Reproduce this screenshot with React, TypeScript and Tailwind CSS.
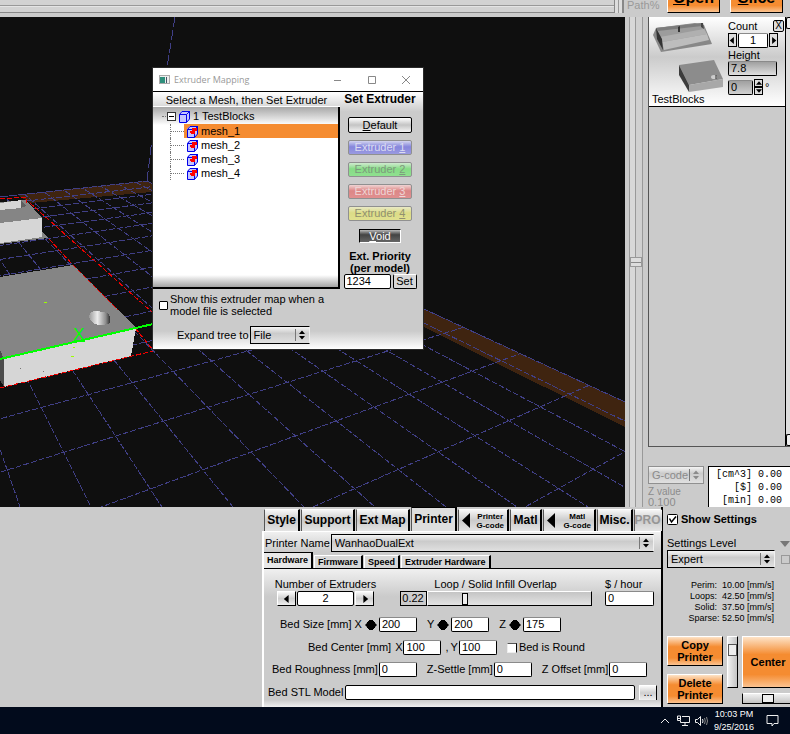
import { useState } from 'react';
import type { ReactNode } from 'react';
import clsx from 'clsx';

const BTN =
  'border border-t-white border-l-white border-r-black border-b-black bg-linear-to-b from-[#fafafa] via-[#cfcfcf] to-[#f0f0f0]';
const FIELD =
  'h-[15px] min-w-0 rounded-[2px] border border-t-[#8a8a8a] border-l-black border-r-black border-b-black bg-white px-[2px] pb-px text-[11px] leading-none';
const ORANGE =
  'border border-t-white border-l-white border-r-black border-b-black bg-[linear-gradient(#fde3c8,#f58c31_35%,#f58c31_75%,#fbc391)] font-bold';

const EXTRUDERS = [
  { n: 1, style: 'bg-linear-to-b from-[#d4d4ee] via-[#8686dc] via-45% to-[#9a9ae0] text-[#dcdcf0]' },
  { n: 2, style: 'bg-linear-to-b from-[#cfe9cf] via-[#86dc86] via-45% to-[#8fe08f] text-[#7d9a7d]' },
  { n: 3, style: 'bg-linear-to-b from-[#eed4d4] via-[#dc8686] via-45% to-[#e09090] text-[#eed6d6]' },
  { n: 4, style: 'bg-linear-to-b from-[#e9e9c4] via-[#dcdc86] via-45% to-[#e0e08f] text-[#909070]' },
];

const TABS = [
  { label: 'Style', width: 'w-[36px]' },
  { label: 'Support', width: 'w-[54px]' },
  { label: 'Ext Map', width: 'w-[54px]' },
  { label: 'Printer', width: 'w-[46px]' },
  { label: 'Printer\nG-code', width: 'w-[51px]', arrow: true },
  { label: 'Matl', width: 'w-[32px]' },
  { label: 'Matl\nG-code', width: 'w-[53px]', arrow: true },
  { label: 'Misc.', width: 'w-[36px]' },
  { label: 'PRO', width: 'w-[28px]', disabled: true },
];

const SUB_TABS = ['Hardware', 'Firmware', 'Speed', 'Extruder Hardware'];

const SPEEDS = [
  'Perim:  10.00 [mm/s]',
  'Loops:  42.50 [mm/s]',
  'Solid:  37.50 [mm/s]',
  'Sparse: 52.50 [mm/s]',
];

// Bed grid: both line families run to a vanishing point on the horizon
const GRID_A = Array.from({ length: 12 }, (_, k) => 20 + 71 * k);
const GRID_B = Array.from({ length: 18 }, (_, k) => 525 - 212 * k);

function Arrow({ dir, size = 8 }: { dir: 'left' | 'right' | 'up' | 'down'; size?: number }) {
  const points = {
    left: '7,0 7,10 1,5',
    right: '3,0 3,10 9,5',
    up: '0,8 10,8 5,2',
    down: '0,2 10,2 5,8',
  }[dir];
  return (
    <svg width={size} height={size} viewBox="0 0 10 10" className="shrink-0">
      <polygon points={points} fill="currentColor" />
    </svg>
  );
}

interface SelectProps {
  id: string;
  value: string;
  label?: string;
  className?: string;
  disabled?: boolean;
}

function Select({ id, value, label, className, disabled }: SelectProps) {
  return (
    <div className={clsx('relative', className)}>
      <select
        id={id}
        aria-label={label}
        disabled={disabled}
        defaultValue={value}
        className={clsx(
          'block h-[18px] w-full appearance-none border bg-linear-to-b from-[#f4f4f4] via-[#cbcbcb] via-40% to-[#e0e0e0] pl-[3px] text-[11px] leading-none',
          disabled
            ? 'border-[#909090] text-[#8b8b8b]'
            : 'border-t-black border-l-black border-r-[#f0f0f0] border-b-black text-black',
        )}
      >
        <option>{value}</option>
      </select>
      <svg
        width="14"
        height="12"
        viewBox="0 0 14 12"
        className={clsx(
          'pointer-events-none absolute top-[3px] right-[1px]',
          disabled ? 'text-[#8b8b8b]' : 'text-black',
        )}
      >
        <path d="M0.5 0V12" stroke="#777" />
        <path d="M4 5L7 1.5L10 5ZM4 7H10L7 10.5Z" fill="currentColor" />
      </svg>
    </div>
  );
}

function Field({ id, label, value, icon }: { id: string; label: string; value: string; icon?: boolean }) {
  return (
    <div className="flex shrink-0 items-center">
      <label htmlFor={id} className="mr-[1px] whitespace-pre">
        {label}
      </label>
      {icon && (
        <svg width="12" height="10" viewBox="0 0 12 10" className="mx-[2px]">
          <path d="M0 5L2 3V2H3V1H4V0H8V1H9V2H10V3L12 5L10 7V8H9V9H8V10H4V9H3V8H2V7Z" />
        </svg>
      )}
      <input id={id} defaultValue={value} className={clsx(FIELD, 'w-[38px]')} />
    </div>
  );
}

function Scene() {
  return (
    <svg
      viewBox="0 17 625 490"
      preserveAspectRatio="xMinYMax slice"
      className="absolute inset-0 h-full w-full"
      shapeRendering="crispEdges"
      aria-hidden="true"
    >
      <defs>
        <clipPath id="bed">
          <polygon points="147,181 851,507 0,507 0,197" />
        </clipPath>
        <linearGradient id="peg">
          <stop offset="0" stopColor="#9a9a9a" />
          <stop offset="0.4" stopColor="#ececec" />
          <stop offset="0.8" stopColor="#8c8c8c" />
          <stop offset="1" stopColor="#333" />
        </linearGradient>
      </defs>
      <rect y="17" width="625" height="490" fill="#0f0f0f" />
      <polygon points="18,195 147,181 625,402 625,427 152,192 30,203" fill="#3f2410" />
      <g stroke="#403f86" strokeDasharray="6 2" fill="none">
        <g clipPath="url(#bed)">
          {GRID_A.map((x) => (
            <line key={x} x1="-138" y1="49" x2={x} y2="507" />
          ))}
          {GRID_B.map((x) => (
            <line key={x} x1="1350" y1="50" x2={x} y2="507" />
          ))}
        </g>
        <path d="M0 197L147 181L625 402" strokeDasharray="8 1" />
        <path d="M175 17L167 68L151 147L147 181" strokeDasharray="10 3" />
      </g>
      {/* tray */}
      <polygon points="0,202 26,200 42,218 42,232 48,238 0,244" fill="#858585" />
      <polygon points="0,203 21,200 21,208 0,210" fill="#d6d6d6" />
      <polygon points="21,200 26,206 21,208" fill="#5f5f5f" />
      <polygon points="0,223 42,218 42,237 0,243" fill="#d6d6d6" />
      {/* block */}
      <polygon points="0,277 73,265 135,327 0,359" fill="#858585" />
      <polygon points="4,359 136,328 131,356 4,387" fill="#d6d6d6" />
      <polygon points="0,350 4,359 4,387 0,380" fill="#4c4c4c" />
      <path d="M90 314Q91 311 97 311L108 313L110 317V322L108 324Q100 326 95 324Q90 321 89 317Z" fill="url(#peg)" />
      <path d="M0 199L26 197V203M30 203L153 313M49 239L73 265L118 310M135 328L153 350M0 388L153 351" stroke="#f00000" strokeDasharray="5 2" fill="none" />
      <path d="M0 359L153 324" stroke="#00ff00" strokeWidth="2" />
      <text x="79" y="340" textAnchor="middle" fill="#00ff00" className="font-['Liberation_Sans'] text-[17px]">
        X
      </text>
      <path d="M74 341H85" stroke="#00ff00" strokeWidth="2" />
      <path d="M44 302.500H47M73 347.500H75M71 356.500H74" stroke="#9cff00" />
      <path d="M20 368.500H21M43 371.500H44" stroke="#777" />
    </svg>
  );
}

function CubeIcon({ mesh }: { mesh?: boolean }) {
  return (
    <svg width="13" height="13" viewBox="0 0 13 13" className="shrink-0">
      <path d="M1 4L4 1H12V8L9 12H1Z" fill="#c4c4ff" />
      <path d="M1.500 4.500H8.500M1.500 4.500V12.500H8.500V4.500M1.500 4.500L4 1.500H12M8.500 4.500L11.500 1.500V9L8.500 12.500" fill="none" stroke="#0000e8" />
      {mesh && <path d="M4 6H6V3H11V6H9V9H5V8H4Z" fill="#ff0000" />}
    </svg>
  );
}

function MeshTree() {
  const [selected, setSelected] = useState('mesh_1');
  return (
    <div className="flex-1 border-r-2 border-b-2 border-r-black border-b-black bg-white bg-linear-to-b from-[#a8a8a8] via-white via-10% to-white">
      <div className="flex h-full flex-col">
        <div className="flex h-[17px] items-center pt-[2px] pl-[9px]">
          <span className="mr-[1px] w-[4px] border-t border-dotted border-[#777]" />
          <svg width="9" height="9" viewBox="0 0 9 9" className="mr-[2px]">
            <rect x=".5" y=".5" width="8" height="8" fill="#fff" stroke="#333" />
            <path d="M2 4.500H7" stroke="#000" />
          </svg>
          <CubeIcon />
          <span className="ml-[2px] whitespace-pre">1 TestBlocks</span>
        </div>
        <div className="ml-[17px] w-[168px]">
          {['mesh_1', 'mesh_2', 'mesh_3', 'mesh_4'].map((name) => (
            <button
              key={name}
              onClick={() => setSelected(name)}
              className="flex h-[14px] w-full border-l border-dotted border-[#777] leading-[14px]"
            >
              <span className="mt-[7px] w-[13px] shrink-0 border-t border-dotted border-[#777]" />
              <span className={clsx('flex flex-1 items-center gap-[2px] pl-[2px]', selected === name && 'bg-[#f58c31]')}>
                <CubeIcon mesh />
                {name}
              </span>
            </button>
          ))}
        </div>
        <div className="mt-auto h-[12px] bg-linear-to-b from-white to-[#a4a4a4]" />
      </div>
    </div>
  );
}

function ExtruderDialog() {
  return (
    <section
      aria-label="Extruder Mapping"
      className="absolute top-[68px] left-[153px] w-[270px] bg-[#cbcbcb] shadow-[0_0_0_1px_#2a2a2a]"
    >
      <header className="flex h-[23px] items-center bg-white pl-[6px] text-[#999]">
        <svg width="11" height="9" viewBox="0 0 11 9">
          <rect x=".5" y=".5" width="10" height="8" fill="#eee" stroke="#aaa" />
          <path d="M1 2H6V8H1Z" fill="#2f8f7c" />
          <path d="M7 2H8V8H7Z" fill="#456" />
        </svg>
        <h2 className="ml-[4px] flex-1 font-['Open_Sans',sans-serif] text-[9px]">Extruder Mapping</h2>
        <button aria-label="Minimize" className="w-[34px]">
          <svg width="8" height="8" viewBox="0 0 8 8" className="mx-auto"><path d="M0 4.500H7" stroke="#888" /></svg>
        </button>
        <button aria-label="Maximize" className="w-[34px]">
          <svg width="8" height="8" viewBox="0 0 8 8" className="mx-auto"><path d="M.5 .5H7.500V7.500H.5Z" fill="none" stroke="#888" /></svg>
        </button>
        <button aria-label="Close" className="w-[34px]">
          <svg width="8" height="8" viewBox="0 0 8 8" className="mx-auto"><path d="M0 0L8 8M8 0L0 8" stroke="#888" /></svg>
        </button>
      </header>
      <div className="flex h-[198px] border-t border-black bg-linear-to-b from-white via-[#cbcbcb] via-10% to-[#cbcbcb]">
        <div className="flex w-[187px] flex-col">
          <h3 className="h-[15px] border-b border-white pt-px text-center leading-[15px]">
            Select a Mesh, then Set Extruder
          </h3>
          <MeshTree />
        </div>
        <div className="flex flex-1 flex-col items-center pr-[3px]">
          <h3 className="mb-[11px] text-[12px] leading-[14px] font-bold">Set Extruder</h3>
          <div className="flex w-[64px] flex-col gap-[7px]">
            <button className="h-[16px] rounded-[2px] border border-black bg-linear-to-b from-[#fff] via-[#c4c4c4] to-[#f4f4f4] leading-none">
              <u>D</u>efault
            </button>
            {EXTRUDERS.map(({ n, style }) => (
              <button key={n} className={clsx('h-[15px] rounded-[2px] border border-[#909090] leading-none', style)}>
                Extruder <u>{n}</u>
              </button>
            ))}
          </div>
          <button className="mt-[8px] h-[15px] w-[42px] border border-t-black border-l-black border-r-white border-b-white bg-linear-to-b from-[#bbb] via-[#444] via-40% to-[#666] leading-none text-white">
            <u>V</u>oid
          </button>
          <label htmlFor="priority" className="mt-[7px] text-center leading-[12px] font-bold">
            Ext. Priority
            <br />
            (per model)
          </label>
          <div className="flex gap-[2px]">
            <input id="priority" defaultValue="1234" className={clsx(FIELD, 'w-[47px] border-t-black')} />
            <button className="h-[15px] w-[24px] rounded-[2px] border border-t-white border-l-black border-r-black border-b-black bg-[#d8d8d8] leading-none">
              Set
            </button>
          </div>
        </div>
      </div>
      <div className="bg-linear-to-b from-[#cbcbcb] via-[#cbcbcb] via-70% to-white pt-[4px] pb-[5px] pl-[6px]">
        <label className="flex items-center gap-[2px] leading-[12px]">
          <input type="checkbox" className="h-[9px] w-[9px] appearance-none rounded-[1px] border border-black bg-white checked:bg-black" />
          <span>
            Show this extruder map when a
            <br />
            model file is selected
          </span>
        </label>
        <div className="mt-[9px] ml-[18px] flex items-center gap-[1px]">
          <label htmlFor="expand">Expand tree to</label>
          <Select id="expand" value="File" className="w-[60px]" />
        </div>
      </div>
    </section>
  );
}

function ModelCard() {
  return (
    <div className="flex h-[90px] flex-1 border-b border-black bg-linear-to-b from-white via-[#cbcbcb] via-45% to-white">
      <div className="flex flex-1 flex-col pl-[3px]">
        <svg width="74" height="76" viewBox="0 0 74 76">
          <polygon points="1,18 9,35 60,27 52,8 43,6 4,11" fill="#888" />
          <polygon points="4,11 50,6 55,17 10,25" fill="#9c9c9c" />
          <polygon points="4,11 50,6 50,9 6,14" fill="#7c7c7c" />
          <polygon points="8,20 52,12 55,17 10,25" fill="#b0b0b0" />
          <polygon points="10,25 55,17 57,23 12,33" fill="#bdbdbd" />
          <polygon points="4,11 10,22 11,33 5,22" fill="#333" />
          <polygon points="26,10 28,9 28,15 26,15" fill="#333" />
          <polygon points="49,6 51,6 52,12 49,10" fill="#444" />
          <polygon points="27,48 62,43 71,62 37,68" fill="#8c8c8c" />
          <polygon points="27,48 37,68 37,75 27,58" fill="#3c3c3c" />
          <polygon points="37,68 71,62 71,70 37,75" fill="#a8a8a8" />
          <ellipse cx="62" cy="60" rx="3" ry="2" fill="#ccc" />
          <path d="M64 58V62" stroke="#333" />
        </svg>
        <span className="leading-[12px]">TestBlocks</span>
      </div>
      <div className="w-[57px] pt-[2px]">
        <div className="flex h-[14px] items-center">
          <label htmlFor="count" className="flex-1">Count</label>
          <button aria-label="Remove model" className="mr-[1px] h-[12px] w-[11px] rounded-[2px] border border-black bg-[#ddd] text-[10px] leading-none">
            X
          </button>
        </div>
        <div className="flex w-[50px] gap-[1px]">
          <button aria-label="Fewer" className="flex h-[14px] w-[9px] items-center justify-center border border-black bg-[#ddd]"><Arrow dir="left" size={7} /></button>
          <input id="count" defaultValue="1" className={clsx(FIELD, 'flex-1 text-center')} />
          <button aria-label="More" className="flex h-[14px] w-[9px] items-center justify-center border border-black bg-[#ddd]"><Arrow dir="right" size={7} /></button>
        </div>
        <label htmlFor="height" className="mt-px block leading-[12px]">Height</label>
        <input id="height" defaultValue="7.8" className={clsx(FIELD, 'block w-[49px] bg-linear-to-b from-[#a0a0a0] to-[#e0e0e0]')} />
        <div className="mt-[3px] flex items-center gap-[1px]">
          <input aria-label="Rotation" defaultValue="0" className={clsx(FIELD, 'w-[25px] bg-linear-to-b from-[#a0a0a0] to-[#d0d0d0]')} />
          <div className="flex flex-col">
            <button aria-label="Rotate up" className="flex h-[8px] w-[9px] items-center justify-center border border-black bg-[#ddd]"><Arrow dir="up" size={6} /></button>
            <button aria-label="Rotate down" className="flex h-[8px] w-[9px] items-center justify-center border border-black bg-[#ddd]"><Arrow dir="down" size={6} /></button>
          </div>
          <span className="ml-[1px]">°</span>
        </div>
      </div>
    </div>
  );
}

function ModelPanel() {
  return (
    <aside className="flex w-[142px] shrink-0 flex-col">
      <div className="flex flex-1 border-b border-l border-[#555]">
        <ModelCard />
        <div className="flex w-[5px] flex-col justify-between border-l border-black bg-[#dedede]">
          <button aria-label="Scroll up" className="h-[12px] rounded-l-[2px] border-y border-l border-black bg-[#eee]" />
          <button aria-label="Scroll down" className="h-[12px] rounded-l-[2px] border-y border-l border-black bg-[#eee]" />
        </div>
      </div>
      <div className="flex h-[60px] justify-between pt-[19px]">
        <div className="leading-[10px] text-[#8b8b8b]">
          <Select id="zmode" label="View mode" value="G-code" disabled className="mb-[3px] w-[56px]" />
          <div className="text-[10px]">Z value</div>
          <div>0.100</div>
        </div>
        <pre className="w-[82px] border-t border-l border-black bg-white pt-px pr-[8px] text-right font-['Liberation_Mono',monospace] text-[10px] leading-[13px]">
          {'[cm^3] 0.00\n[$] 0.00\n[min] 0.00'}
        </pre>
      </div>
    </aside>
  );
}

function PrinterTabs() {
  const [active, setActive] = useState('Printer');
  return (
    <div className="flex h-[25px] items-end gap-px pl-[2px]">
      {TABS.map((tab) => (
        <button
          key={tab.label}
          disabled={tab.disabled}
          onClick={() => setActive(tab.label)}
          className={clsx(
            'flex shrink-0 items-center border-l border-r-2 border-l-[#555] border-r-black font-bold',
            tab.width,
            tab.disabled ? 'border-r-transparent text-[#969696]' : 'text-black',
            active === tab.label
              ? 'h-[24px] border-t border-t-black bg-[#dedede]'
              : 'h-[22px] border-t border-t-white bg-linear-to-b from-[#f6f6f6] via-[#cbcbcb] to-[#e4e4e4]',
            tab.arrow ? 'justify-between px-[3px] text-[8px] leading-[9px]' : 'justify-center text-[12px]',
          )}
        >
          {tab.arrow && (
            <svg width="8" height="15" viewBox="0 0 8 15" className="shrink-0">
              <polygon points="8,0 8,15 0,7.500" />
            </svg>
          )}
          <span className="whitespace-pre">{tab.label}</span>
        </button>
      ))}
    </div>
  );
}

function Row({ className, children }: { className?: string; children: ReactNode }) {
  return <div className={clsx('flex h-[15px] items-center', className)}>{children}</div>;
}

function PrinterPanel() {
  const [sub, setSub] = useState('Hardware');
  return (
    <section className="flex w-[401px] shrink-0 flex-col border-r-2 border-b border-r-black border-b-black bg-[#cbcbcb]">
      <PrinterTabs />
      <div className="flex flex-1 flex-col border-t border-l-2 border-white">
        <div className="flex items-center gap-[1px] bg-linear-to-b from-[#f0f0f0] to-[#cbcbcb] pt-[2px] pr-[7px] pl-px">
          <label htmlFor="printer">Printer Name</label>
          <Select id="printer" value="WanhaoDualExt" className="flex-1" />
        </div>
        <div className="flex h-[17px] items-end border-b border-black">
          {SUB_TABS.map((name) => (
            <button
              key={name}
              onClick={() => setSub(name)}
              className={clsx(
                'mr-px border-r-2 border-r-black px-[3px] text-[9px] leading-none font-bold',
                sub === name
                  ? 'h-[16px] border-t border-t-black bg-[#e8e8e8]'
                  : 'h-[13px] border-t border-l border-t-white border-l-white bg-[#d8d8d8]',
              )}
            >
              {name}
            </button>
          ))}
        </div>
        <div className="flex flex-1 flex-col bg-linear-to-b from-[#f0f0f0] via-[#cbcbcb] via-20% to-[#cbcbcb] pt-[8px]">
          <div className="flex items-end justify-between pr-[7px] pl-[13px]">
            <div className="w-[97px]">
              <label htmlFor="extruders" className="flex justify-center leading-[14px] whitespace-nowrap">Number of Extruders</label>
              <div className="flex gap-[1px]">
                <button aria-label="Fewer extruders" className={clsx(BTN, 'flex h-[15px] w-[19px] shrink-0 items-center justify-center')}><Arrow dir="left" /></button>
                <input id="extruders" defaultValue="2" className={clsx(FIELD, 'w-full border-t-black text-center')} />
                <button aria-label="More extruders" className={clsx(BTN, 'flex h-[15px] w-[19px] shrink-0 items-center justify-center')}><Arrow dir="right" /></button>
              </div>
            </div>
            <div className="ml-[12px] w-[192px]">
              <label htmlFor="overlap" className="block text-center leading-[14px]">Loop / Solid Infill Overlap</label>
              <div className="flex">
                <output htmlFor="overlap" className="h-[15px] w-[27px] border border-black text-center leading-[13px]">0.22</output>
                <input
                  id="overlap"
                  type="range"
                  defaultValue="22"
                  className="h-[15px] min-w-0 flex-1 appearance-none border border-t-white border-l-white border-r-black border-b-black bg-linear-to-b from-[#c4c4c4] to-[#e4e4e4] [&::-webkit-slider-thumb]:h-[12px] [&::-webkit-slider-thumb]:w-[6px] [&::-webkit-slider-thumb]:appearance-none [&::-webkit-slider-thumb]:border [&::-webkit-slider-thumb]:border-black [&::-webkit-slider-thumb]:bg-[#eee]"
                />
              </div>
            </div>
            <div className="w-[49px]">
              <label htmlFor="cost" className="block leading-[14px]">$ / hour</label>
              <input id="cost" defaultValue="0" className={clsx(FIELD, 'block w-full')} />
            </div>
          </div>
          <Row className="mt-[11px] pl-[16px]">
            <span className="mr-[3px]">Bed Size [mm]</span>
            <div className="flex gap-[10px]">
              <Field id="size-x" label="X" value="200" icon />
              <Field id="size-y" label="Y" value="200" icon />
              <Field id="size-z" label="Z" value="175" icon />
            </div>
          </Row>
          <Row className="mt-[8px] pl-[44px]">
            <span className="mr-[4px]">Bed Center [mm]</span>
            <Field id="center-x" label="X" value="100" />
            <span className="mr-[2px] ml-[4px]">,</span>
            <Field id="center-y" label="Y" value="100" />
            <label className="ml-[10px] flex items-center gap-[2px]">
              <input type="checkbox" className="h-[10px] w-[10px] appearance-none border border-t-[#555] border-r-black border-b-[#eee] border-l-[#eee] bg-white checked:bg-black" />
              Bed is Round
            </label>
          </Row>
          <Row className="mt-[7px] gap-[10px] pl-[8px]">
            <Field id="rough" label="Bed Roughness [mm]" value="0" />
            <Field id="settle" label="Z-Settle [mm]" value="0" />
            <Field id="offset" label="Z Offset [mm]" value="0" />
          </Row>
          <Row className="mt-[8px] gap-[4px] pr-[4px] pl-[4px]">
            <div className="flex flex-1 items-center gap-[2px]">
              <label htmlFor="stl">Bed STL Model</label>
              <input id="stl" className={clsx(FIELD, 'flex-1 border-t-black')} />
            </div>
            <button aria-label="Browse for bed model" className={clsx(BTN, 'h-[16px] w-[18px] leading-none')}>...</button>
          </Row>
          <div className="mt-auto h-[7px] bg-linear-to-b from-[#cbcbcb] to-[#f0f0f0]" />
        </div>
      </div>
    </section>
  );
}

function SettingsPanel() {
  return (
    <section className="flex w-[127px] shrink-0 flex-col overflow-hidden pt-[6px] pl-[4px]">
      <label className="flex items-center gap-[3px] font-bold leading-[13px]">
        <input type="checkbox" defaultChecked className="peer sr-only" />
        <svg width="11" height="11" viewBox="0 0 11 11" className="[&>path]:hidden peer-checked:[&>path]:block">
          <rect x=".5" y=".5" width="10" height="10" rx="1" fill="#fff" stroke="#000" />
          <path d="M2.500 4.500L4.500 8L9 2.500" fill="none" stroke="#000" strokeWidth="1.500" />
        </svg>
        Show Settings
      </label>
      <div className="mt-[11px] flex items-center justify-between leading-[13px]">
        <label htmlFor="level">Settings Level</label>
        <span className="text-[#777]"><Arrow dir="down" size={10} /></span>
      </div>
      <div className="flex items-center justify-between">
        <Select id="level" value="Expert" className="w-[108px]" />
        <input type="checkbox" aria-label="Lock level" disabled className="h-[9px] w-[9px] appearance-none border border-[#999]" />
      </div>
      <div className="mt-[12px] w-[107px] text-right text-[9px] leading-[11px] whitespace-pre">
        {SPEEDS.map((line) => (
          <div key={line}>{line}</div>
        ))}
      </div>
      <div className="mt-[12px] flex gap-[4px]">
        <div className="flex w-[56px] shrink-0 flex-col gap-[8px] text-[11px] leading-[12px]">
          <button className={clsx(ORANGE, 'h-[30px]')}>Copy Printer</button>
          <button className={clsx(ORANGE, 'h-[30px]')}>Delete Printer</button>
        </div>
        <input
          type="range"
          aria-label="Vertical position"
          defaultValue="18"
          className="h-[52px] w-[11px] shrink-0 appearance-none border border-t-white border-l-white border-r-black border-b-black bg-linear-to-r from-[#f0f0f0] to-[#c4c4c4] [writing-mode:vertical-lr] [&::-webkit-slider-thumb]:h-[12px] [&::-webkit-slider-thumb]:w-[9px] [&::-webkit-slider-thumb]:appearance-none [&::-webkit-slider-thumb]:border [&::-webkit-slider-thumb]:border-[#555] [&::-webkit-slider-thumb]:bg-[#eee]"
        />
        <div className="flex w-[52px] shrink-0 flex-col gap-[5px]">
          <button className={clsx(ORANGE, 'h-[52px] text-[11px]')}>Center</button>
          <input
            type="range"
            aria-label="Horizontal position"
            defaultValue="50"
            className="h-[11px] w-full appearance-none border border-t-white border-l-black border-b-black bg-linear-to-b from-[#f0f0f0] to-[#c4c4c4] [&::-webkit-slider-thumb]:h-[9px] [&::-webkit-slider-thumb]:w-[12px] [&::-webkit-slider-thumb]:appearance-none [&::-webkit-slider-thumb]:border [&::-webkit-slider-thumb]:border-black [&::-webkit-slider-thumb]:bg-[#eee]"
          />
        </div>
      </div>
    </section>
  );
}

function Taskbar() {
  return (
    <footer className="flex h-[27px] shrink-0 items-center justify-end bg-[#020b1c] pr-[11px] text-[9px] text-white">
      <svg width="10" height="6" viewBox="0 0 10 6" className="mr-[7px]" fill="none" stroke="#eee">
        <path d="M1 5L5 1L9 5" />
      </svg>
      <svg width="13" height="12" viewBox="0 0 13 12" className="mr-[5px]" fill="none" stroke="#eee">
        <path d="M5 1.500H12.500V7.500H3.500V6M5 10.500H11M8 8V10" />
        <path d="M.5 1V5.500H3.500V1ZM1 3.500H3" />
      </svg>
      <svg width="13" height="12" viewBox="0 0 13 12" className="mr-[6px]" fill="none" stroke="#eee">
        <path d="M.5 4.500H2.500L5.500 1.500V10.500L2.500 7.500H.5ZM7.500 4Q8.500 6 7.500 8" />
        <path d="M9.500 3Q11 6 9.500 9M11.500 2Q13.500 6 11.500 10" stroke="#888" />
      </svg>
      <time className="pt-px text-center leading-[13px]">
        10:03 PM
        <br />
        9/25/2016
      </time>
      <svg width="13" height="13" viewBox="0 0 13 13" className="ml-[12px]" fill="none" stroke="#eee">
        <path d="M1 1.500H12V9.500H8L6 12V9.500H1Z" />
      </svg>
    </footer>
  );
}

export default function App() {
  return (
    <div className="relative flex h-screen flex-col overflow-hidden bg-[#cbcbcb] font-['Liberation_Sans',sans-serif] text-[11px] leading-[13px] text-black">
      <div className="flex h-[17px] shrink-0 items-end overflow-hidden">
        <div className="h-[17px] flex-1">
          <input
            id="path"
            type="range"
            defaultValue="100"
            className="block h-[13px] w-full appearance-none border-r border-b border-[#888] bg-[linear-gradient(#d2d2d2_0_5px,#999_5px_6px,#e4e4e4_6px_7px,#d2d2d2_7px)] [&::-webkit-slider-thumb]:h-[13px] [&::-webkit-slider-thumb]:w-[9px] [&::-webkit-slider-thumb]:appearance-none [&::-webkit-slider-thumb]:border-x [&::-webkit-slider-thumb]:border-[#888] [&::-webkit-slider-thumb]:bg-[linear-gradient(to_right,#ddd_0_3px,#999_3px_4px,#ddd_4px)]"
          />
        </div>
        <label htmlFor="path" className="w-[43px] pb-[5px] pl-[3px] text-[#999]">Path%</label>
        <div className="mb-[4px] flex w-[123px] items-end gap-[10px] text-[16px] leading-[16px]">
          <button className={clsx(ORANGE, 'h-[28px] w-[53px] pb-[2px]')}><u>O</u>pen</button>
          <button className={clsx(ORANGE, 'h-[28px] w-[53px] pb-[2px]')}><u>S</u>lice</button>
        </div>
      </div>
      <main className="flex min-h-0 flex-1">
        <div className="relative flex-1 bg-[#0f0f0f]">
          <Scene />
        </div>
        <div className="flex w-[23px] shrink-0 pl-[4px]">
          <input
            type="range"
            aria-label="Layer"
            defaultValue="50"
            className="h-full w-[14px] appearance-none bg-[linear-gradient(to_right,#999_0_1px,#d8d8d8_1px_6px,#999_6px_7px,#d0d0d0_7px_13px,#999_13px)] [writing-mode:vertical-lr] [&::-webkit-slider-thumb]:h-[10px] [&::-webkit-slider-thumb]:w-[12px] [&::-webkit-slider-thumb]:appearance-none [&::-webkit-slider-thumb]:border [&::-webkit-slider-thumb]:border-[#999] [&::-webkit-slider-thumb]:bg-[linear-gradient(#ddd_0_4px,#888_4px_5px,#ddd_5px)]"
          />
        </div>
        <ModelPanel />
      </main>
      <div className="flex h-[200px] shrink-0 justify-end">
        <PrinterPanel />
        <SettingsPanel />
      </div>
      <Taskbar />
      <ExtruderDialog />
    </div>
  );
}
